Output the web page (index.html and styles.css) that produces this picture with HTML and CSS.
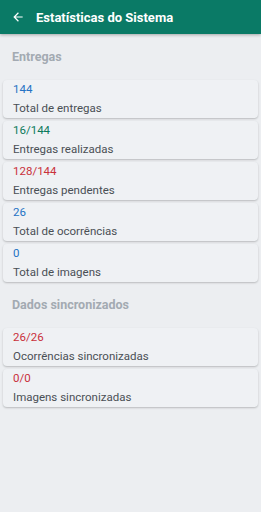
FILE: index.html
```html
<!DOCTYPE html>
<html lang="pt">
  <head>
    <meta charset="UTF-8" />
    <meta name="viewport" content="width=device-width, initial-scale=1.0" />
    <title>Estatísticas do Sistema</title>
    <link rel="stylesheet" href="styles.css">
  </head>
  <body>
    <header class="toolbar">
      <svg class="back" width="14" height="14" viewBox="0 0 24 24">
        <path d="M20 11H7.83l5.59-5.59L12 4l-8 8 8 8 1.41-1.41L7.83 13H20v-2z" fill="#fff"/>
      </svg>
      <h1>Estatísticas do Sistema</h1>
    </header>

    <main class="content">
      <h2 class="section-title">Entregas</h2>
      <div class="card-list">
        <div class="card">
          <div class="value blue">144</div>
          <div class="label">Total de entregas</div>
        </div>
        <div class="card">
          <div class="value green">16/144</div>
          <div class="label">Entregas realizadas</div>
        </div>
        <div class="card">
          <div class="value red">128/144</div>
          <div class="label">Entregas pendentes</div>
        </div>
        <div class="card">
          <div class="value blue">26</div>
          <div class="label">Total de ocorrências</div>
        </div>
        <div class="card">
          <div class="value blue">0</div>
          <div class="label">Total de imagens</div>
        </div>
      </div>

      <h2 class="section-title">Dados sincronizados</h2>
      <div class="card-list">
        <div class="card">
          <div class="value red">26/26</div>
          <div class="label">Ocorrências sincronizadas</div>
        </div>
        <div class="card">
          <div class="value red">0/0</div>
          <div class="label">Imagens sincronizadas</div>
        </div>
      </div>
    </main>
  </body>
</html>
```

FILE: styles.css
```css
body {
  font-family: Roboto, "Noto Sans", sans-serif;
  background-color: #eceef1;
  color: #444;
  margin: 0;
  height: 512px;
}

.toolbar {
  height: 34px;
  background-color: #0a7a66;
  display: flex;
  align-items: center;
  padding-left: 11px;
  box-shadow: 0 1px 3px rgba(0, 0, 0, 0.3);
}

.back {
  margin-right: 11px;
}

.toolbar h1 {
  margin: 0;
  font-size: 13px;
  font-weight: 700;
  color: #fff;
}

.content {
  padding: 0 3px;
}

.section-title {
  margin: 14px 0 14px 9px;
  font-size: 12.5px;
  line-height: 18px;
  font-weight: 700;
  color: #a3aab2;
}

.card-list {
  display: flex;
  flex-direction: column;
  gap: 3px;
}

.card {
  background-color: #eff1f4;
  border-radius: 4px;
  padding: 0 10px;
  height: 38px;
  box-shadow: 0 1px 2px rgba(0, 0, 0, 0.22);
}

.value,
.label {
  font-size: 11.5px;
  line-height: 19px;
}

.label {
  color: #4a4f55;
}

.blue {
  color: #2473c4;
}

.green {
  color: #0c7a5c;
}

.red {
  color: #c9303b;
}
```
